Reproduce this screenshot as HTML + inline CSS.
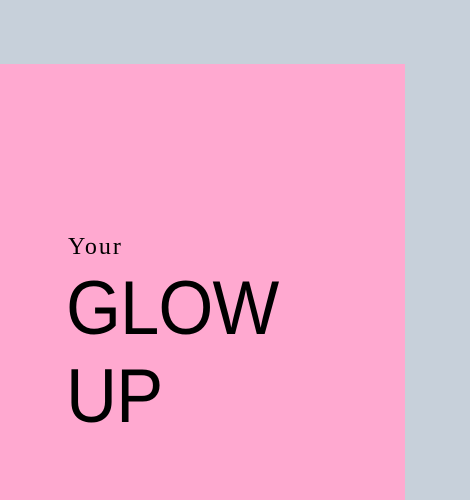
<!DOCTYPE html>
<html><head><style>
html,body{margin:0;padding:0;width:470px;height:500px;overflow:hidden;background:#c7d0da;}
.pink{position:absolute;left:0;top:64px;width:405px;height:436px;background:#ffa9d0;}
.t{position:absolute;white-space:nowrap;color:#000;}
.your{left:68px;top:235px;font:24px/24px "Liberation Serif",serif;letter-spacing:2px;}
.big{left:66px;font:76px/76px "Liberation Sans",sans-serif;letter-spacing:-1px;transform:scaleX(0.93);transform-origin:0 0;}
</style></head><body>
<div class="pink"></div>
<div class="t your">Your</div>
<div class="t big" style="top:271px">GLOW</div>
<div class="t big" style="top:359px">UP</div>
</body></html>
